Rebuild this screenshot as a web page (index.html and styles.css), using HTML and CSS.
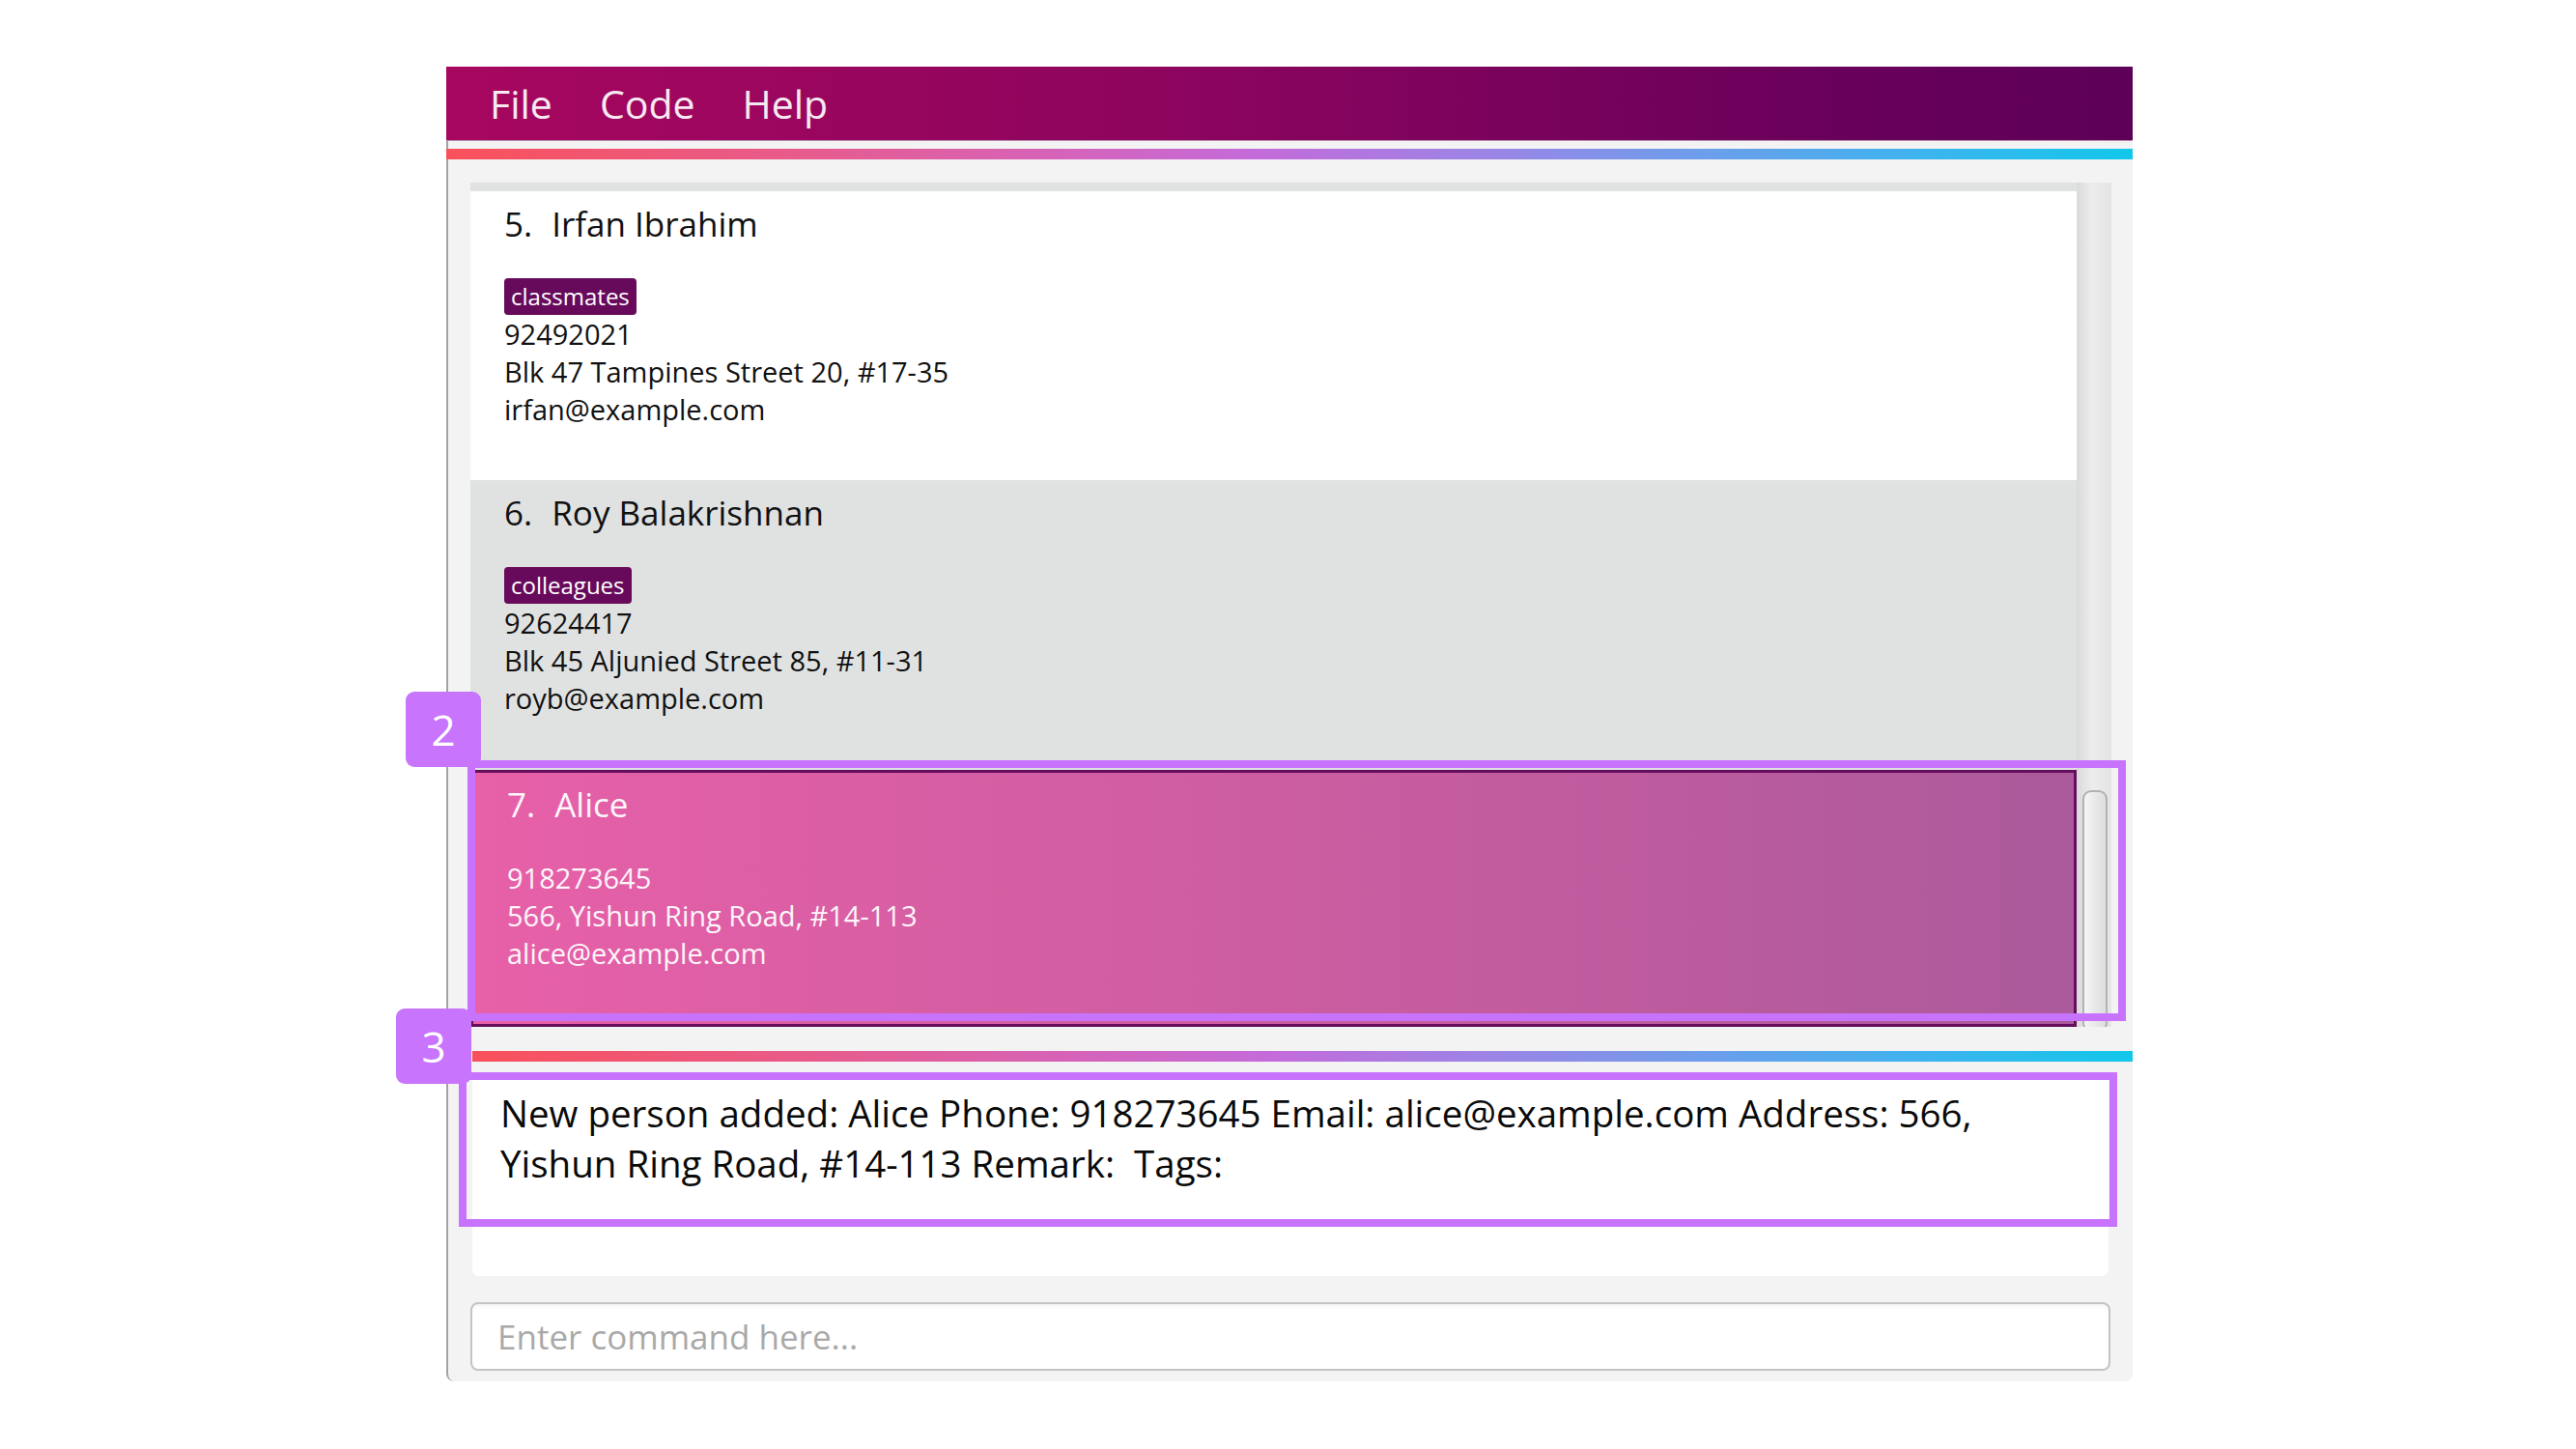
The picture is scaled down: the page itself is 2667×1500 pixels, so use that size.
FILE: index.html
```html
<!DOCTYPE html>
<html lang="en">
<head>
<meta charset="utf-8">
<title>Address App</title>
<link rel="stylesheet" href="styles.css">
</head>
<body>
<div class="stage">
  <div class="window">
    <div class="menubar">
      <span class="menu-item">File</span>
      <span class="menu-item">Code</span>
      <span class="menu-item">Help</span>
    </div>
    <div class="accent accent-top"></div>
    <div class="list-panel">
      <div class="cards">
        <div class="card-tail"></div>
        <div class="card card-light">
          <div class="name"><span>5.</span><span>Irfan Ibrahim</span></div>
          <div class="tags"><span class="tag">classmates</span></div>
          <div class="line">92492021</div>
          <div class="line">Blk 47 Tampines Street 20, #17-35</div>
          <div class="line">irfan@example.com</div>
        </div>
        <div class="card card-gray">
          <div class="name"><span>6.</span><span>Roy Balakrishnan</span></div>
          <div class="tags"><span class="tag">colleagues</span></div>
          <div class="line">92624417</div>
          <div class="line">Blk 45 Aljunied Street 85, #11-31</div>
          <div class="line">royb@example.com</div>
        </div>
        <div class="card card-selected">
          <div class="name"><span>7.</span><span>Alice</span></div>
          <div class="tags tags-empty"></div>
          <div class="line">918273645</div>
          <div class="line">566, Yishun Ring Road, #14-113</div>
          <div class="line">alice@example.com</div>
        </div>
      </div>
      <div class="scrollbar"><div class="thumb"></div></div>
    </div>
    <div class="accent accent-bottom"></div>
    <div class="result">New person added: Alice Phone: 918273645 Email: alice@example.com Address: 566, Yishun Ring Road, #14-113 Remark:  Tags: </div>
    <input class="command" type="text" placeholder="Enter command here...">
  </div>
  <div class="callout callout-list"></div>
  <div class="badge badge-list">2</div>
  <div class="callout callout-result"></div>
  <div class="badge badge-result">3</div>
</div>
</body>
</html>
```
FILE: styles.css
```css
* {
  box-sizing: border-box;
}

html, body {
  margin: 0;
  padding: 0;
  background: #ffffff;
}

body {
  font-family: "Open Sans", "Noto Sans", sans-serif;
  color: #111111;
}

.stage {
  position: relative;
  width: 2667px;
  height: 1500px;
  padding: 69px 0 0 462px;
}

.window {
  width: 1746px;
  height: 1361px;
  background: #f3f3f3;
  border-left: 2px solid #a3a3a3;
  border-bottom-left-radius: 8px;
  border-bottom-right-radius: 8px;
  padding-bottom: 11px;
  display: flex;
  flex-direction: column;
}

.menubar {
  margin-left: -2px;
  height: 77px;
  flex: 0 0 77px;
  display: flex;
  align-items: center;
  gap: 49px;
  padding-left: 45px;
  background: linear-gradient(to right, #a7075f 0%, #8d055e 43%, #69005b 82%, #5e0057 100%);
  border-bottom: 1px solid #b88ab0;
}

.menu-item {
  font-size: 41px;
  color: #f6eaf2;
  line-height: 1;
}

.accent {
  height: 11px;
  flex: 0 0 11px;
  background: linear-gradient(to right, #f9515b 0%, #e85b8a 20%, #d663b8 36%, #c46bda 48%, #9a85e6 62%, #6e9deb 74%, #3fb3ee 87%, #12c7ea 100%);
}

.accent-top {
  margin-left: -2px;
  margin-top: 8px;
}

.accent-bottom {
  margin-left: 25px;
  margin-top: 25px;
}

.list-panel {
  margin-top: 24px;
  margin-left: 23px;
  width: 1699px;
  height: 874px;
  flex: 0 0 874px;
  display: flex;
  overflow: hidden;
}

.cards {
  width: 1663px;
  display: flex;
  flex-direction: column;
  overflow: hidden;
}

.card-tail {
  flex: 0 0 9px;
  background: #e0e2e2;
}

.card {
  flex: 0 0 299px;
  padding: 10px 35px 0 35px;
  display: flex;
  flex-direction: column;
}

.card-light {
  background: #ffffff;
}

.card-gray {
  flex-basis: 300px;
  background: #e0e2e2;
}

.card-selected {
  flex: 0 0 266px;
  border: 3px solid #650e5e;
  padding: 9px 35px 0 35px;
  background: linear-gradient(to right, #e760a8 0%, #cc5da1 50%, #ab5a9b 100%);
  color: #fdf6fa;
}

.name {
  display: flex;
  gap: 20px;
  font-size: 35px;
  line-height: 48px;
  height: 48px;
  margin-bottom: 32px;
}

.tags {
  display: flex;
  height: 38px;
  gap: 8px;
}

.tags-empty {
  height: 0;
}

.tag {
  display: inline-block;
  background: #680a5c;
  color: #ffffff;
  font-size: 24px;
  line-height: 38px;
  height: 38px;
  padding: 0 7px;
  border-radius: 4px;
}

.line {
  font-size: 29px;
  line-height: 39px;
  height: 39px;
  white-space: nowrap;
}

.scrollbar {
  width: 36px;
  flex: 0 0 36px;
  background: linear-gradient(to right, #dadada 0%, #ececec 45%, #e4e4e4 100%);
  padding-left: 6px;
}

.thumb {
  margin-top: 629px;
  width: 26px;
  height: 250px;
  border: 2px solid #b2b2b2;
  border-radius: 9px;
  background: linear-gradient(to right, #f6f6f6 0%, #e6e6e6 60%, #dedede 100%);
}

.result {
  margin-top: 11px;
  margin-left: 25px;
  width: 1694px;
  height: 211px;
  flex: 0 0 211px;
  background: #ffffff;
  border-radius: 0 0 7px 7px;
  padding: 16px 40px 0 29px;
  font-size: 38.5px;
  line-height: 52px;
  color: #0a0a0a;
  white-space: pre-wrap;
}

.command {
  display: block;
  margin-top: 27px;
  margin-left: 23px;
  width: 1698px;
  height: 71px;
  flex: 0 0 71px;
  border: 2px solid #c4c4c4;
  border-radius: 8px;
  background: #ffffff;
  box-shadow: inset 0 4px 5px -3px rgba(0, 0, 0, 0.08);
  padding: 0 0 0 26px;
  font-family: "Open Sans", "Noto Sans", sans-serif;
  font-size: 35px;
  color: #333333;
  outline: none;
}

.command::placeholder {
  color: #a9a9a9;
}

.callout {
  position: absolute;
  border: 8px solid #c873fd;
}

.callout-list {
  left: 484px;
  top: 787px;
  width: 1717px;
  height: 270px;
}

.callout-result {
  left: 475px;
  top: 1110px;
  width: 1717px;
  height: 160px;
}

.badge {
  position: absolute;
  width: 78px;
  height: 78px;
  border-radius: 9px;
  background: #c874fd;
  color: #ffffff;
  font-size: 44px;
  line-height: 78px;
  text-align: center;
}

.badge-list {
  left: 420px;
  top: 716px;
}

.badge-result {
  left: 410px;
  top: 1044px;
}
```
